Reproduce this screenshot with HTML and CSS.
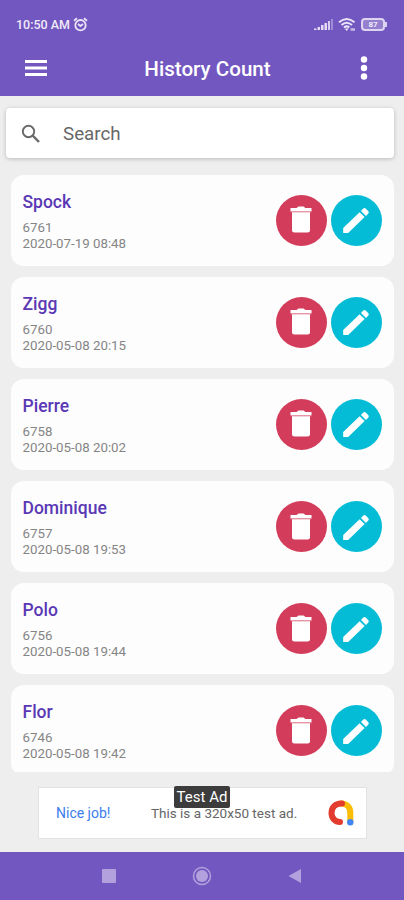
FILE: index.html
```html
<!DOCTYPE html>
<html lang="en">
<head>
  <meta charset="UTF-8">
  <meta name="viewport" content="width=device-width, initial-scale=1.0">
  <title>History Count</title>
  <link rel="stylesheet" href="styles.css">
</head>
<body>
  <!-- Shared icons -->
  <svg class="sprite" width="0" height="0">
    <symbol id="trash" viewBox="0 0 22 28">
      <path d="M0.5 2h6l2-1.400h5l2 1.400h6v3.300h-21z"/>
      <path d="M0.5 5.300h21v1h-21z" opacity=".4"/>
      <path d="M2 6.300h18v17.700a2.500 2.500 0 0 1-2.500 2.500h-13a2.500 2.500 0 0 1-2.500-2.500z"/>
    </symbol>
    <symbol id="pencil" viewBox="0 0 28 28">
      <path d="M1.200 22L17.600 6.300l5 4.800L6.200 27H1.200z"/>
      <path d="M19 5l2.300-2.400q1.200-1.100 2.400 0l2.600 2.600q1.100 1.100 0 2.300L24 9.900z"/>
    </symbol>
  </svg>

  <header class="header">
    <div class="status-bar">
      <span class="time">10:50 AM</span>
      <svg class="alarm" width="15" height="15" viewBox="0 0 15 15" fill="none" stroke="#e9e3f7" stroke-width="1.8">
        <circle cx="7.5" cy="8.2" r="5.2"/>
        <path d="M1 3.7l3-2.400M14 3.7l-3-2.400M5 7l2.500 2L10 7"/>
      </svg>
      <div class="status-icons">
        <svg width="19" height="12" viewBox="0 0 19 12" fill="#e4dcf4">
          <path d="M0 9.5h2.5V11H0zM3.600 8h2.400v3H3.600zM7 6h2.500v5H7zM10.500 4H13v7h-2.500z"/>
          <path d="M14 2h2v9h-2z" opacity=".9"/>
          <path d="M17 0h2v11h-2z" opacity=".4"/>
        </svg>
        <svg width="18" height="14" viewBox="0 0 18 14" fill="none" stroke="#e9e3f7" stroke-width="2">
          <path d="M1 4.300q7.700-6.500 15.500 0M3.500 7q5.200-4.500 10.500 0M6 9.500q2.700-2.300 5.300 0"/>
          <path d="M8.700 13L6.700 10.400h4z" fill="#e9e3f7" stroke="none"/>
          <path d="M12.500 11.500h4.500" stroke-width="2.500" opacity=".7"/>
        </svg>
        <div class="battery">87</div>
      </div>
    </div>
    <div class="toolbar">
      <svg width="22" height="16" viewBox="0 0 22 16" fill="#fff">
        <path d="M0 0h22v3H0zM0 6.500h22v3H0zM0 13h22v3H0z"/>
      </svg>
      <h1 class="title">History Count</h1>
      <svg width="8" height="24" viewBox="0 0 8 24" fill="#fff">
        <circle cx="4" cy="3.500" r="3.200"/>
        <circle cx="4" cy="12" r="3.200"/>
        <circle cx="4" cy="20.500" r="3.200"/>
      </svg>
    </div>
  </header>

  <main class="content">
    <div class="search">
      <svg width="20" height="20" viewBox="0 0 20 20" fill="none" stroke="#6a6a6a" stroke-width="1.900">
        <circle cx="7.500" cy="7.500" r="5.700"/>
        <path d="M11.700 11.700l6.300 6.300" stroke-width="2.400"/>
      </svg>
      <span>Search</span>
    </div>

    <div class="list">
      <div class="card">
        <div class="info">
          <h2>Spock</h2>
          <p>6761</p>
          <p>2020-07-19 08:48</p>
        </div>
        <button class="round delete"><svg width="22" height="28"><use href="#trash"/></svg></button>
        <button class="round edit"><svg width="28" height="28"><use href="#pencil"/></svg></button>
      </div>
      <div class="card">
        <div class="info">
          <h2>Zigg</h2>
          <p>6760</p>
          <p>2020-05-08 20:15</p>
        </div>
        <button class="round delete"><svg width="22" height="28"><use href="#trash"/></svg></button>
        <button class="round edit"><svg width="28" height="28"><use href="#pencil"/></svg></button>
      </div>
      <div class="card">
        <div class="info">
          <h2>Pierre</h2>
          <p>6758</p>
          <p>2020-05-08 20:02</p>
        </div>
        <button class="round delete"><svg width="22" height="28"><use href="#trash"/></svg></button>
        <button class="round edit"><svg width="28" height="28"><use href="#pencil"/></svg></button>
      </div>
      <div class="card">
        <div class="info">
          <h2>Dominique</h2>
          <p>6757</p>
          <p>2020-05-08 19:53</p>
        </div>
        <button class="round delete"><svg width="22" height="28"><use href="#trash"/></svg></button>
        <button class="round edit"><svg width="28" height="28"><use href="#pencil"/></svg></button>
      </div>
      <div class="card">
        <div class="info">
          <h2>Polo</h2>
          <p>6756</p>
          <p>2020-05-08 19:44</p>
        </div>
        <button class="round delete"><svg width="22" height="28"><use href="#trash"/></svg></button>
        <button class="round edit"><svg width="28" height="28"><use href="#pencil"/></svg></button>
      </div>
      <div class="card">
        <div class="info">
          <h2>Flor</h2>
          <p>6746</p>
          <p>2020-05-08 19:42</p>
        </div>
        <button class="round delete"><svg width="22" height="28"><use href="#trash"/></svg></button>
        <button class="round edit"><svg width="28" height="28"><use href="#pencil"/></svg></button>
      </div>
    </div>
  </main>

  <div class="ad">
    <span class="ad-link">Nice job!</span>
    <span class="ad-text">This is a 320x50 test ad.</span>
    <svg width="26" height="26" viewBox="0 0 26 26" fill="none" stroke-width="6" stroke-linecap="round">
      <path d="M13 3.500C19 3.500 22.300 7.500 22.300 12.500V22" stroke="#fbbc04"/>
      <path d="M14 3.500C7 3 3.500 8 3.500 13C3.500 18 7 22 12 22" stroke="#e33b2e"/>
      <circle cx="22.300" cy="22.300" r="3.200" fill="#4285f4" stroke="none"/>
    </svg>
    <span class="ad-label">Test Ad</span>
  </div>

  <nav class="nav-bar">
    <svg width="14" height="14"><rect width="14" height="14" rx="1" fill="#b3a1dd"/></svg>
    <svg width="20" height="20" viewBox="0 0 20 20">
      <circle cx="10" cy="10" r="8.500" fill="none" stroke="#b3a1dd" stroke-width="1.500"/>
      <circle cx="10" cy="10" r="6" fill="#b3a1dd"/>
    </svg>
    <svg width="14" height="16" viewBox="0 0 14 16"><path d="M0.500 8L13 1v14z" fill="#b3a1dd"/></svg>
  </nav>
</body>
</html>
```

FILE: styles.css
```css
* {
  box-sizing: border-box;
}

body {
  margin: 0;
  height: 900px;
  display: flex;
  flex-direction: column;
  overflow: hidden;
  background-color: #eeeeee;
  font-family: Roboto, sans-serif;
}

h1, h2, p {
  margin: 0;
}

.sprite {
  position: absolute;
}

/* Header */
.header {
  height: 96px;
  flex-shrink: 0;
  background-color: #7357c0;
  color: white;
}

.status-bar {
  display: flex;
  align-items: center;
  height: 42px;
  padding: 7px 17px 0 16px;
}

.time {
  font-size: 12.5px;
  font-weight: 500;
  color: #f0ebfa;
}

.alarm {
  margin-left: 3px;
}

.status-icons {
  display: flex;
  align-items: center;
  gap: 5px;
  margin-left: auto;
}

.battery {
  position: relative;
  width: 24px;
  height: 13px;
  margin-right: 2px;
  border: 2px solid #ddd4f1;
  border-radius: 4px;
  background-color: #9580d0;
  color: #f0ebfa;
  font-size: 8px;
  font-weight: 700;
  line-height: 9px;
  text-align: center;
}

/* Battery tip */
.battery::after {
  content: "";
  position: absolute;
  right: -4px;
  top: 2px;
  width: 2px;
  height: 5px;
  background-color: #ddd4f1;
}

.toolbar {
  display: flex;
  align-items: center;
  justify-content: space-between;
  height: 52px;
  padding: 0 36px 0 25px;
}

.title {
  padding-left: 8px;
  padding-top: 2px;
  font-size: 20.6px;
  font-weight: 500;
}

/* Search and list */
.content {
  height: 676px;
  flex-shrink: 0;
  padding: 12px 10px 0 6px;
  overflow: hidden;
}

.search {
  display: flex;
  align-items: center;
  gap: 22px;
  height: 50px;
  padding: 1px 0 0 15px;
  border-radius: 4px;
  background-color: white;
  box-shadow: 0 1px 4px rgba(0, 0, 0, 0.22);
  color: #686868;
  font-size: 18.8px;
}

.list {
  display: flex;
  flex-direction: column;
  gap: 11.2px;
  margin: 16.5px 0 0 5px;
  height: 597.5px;
  overflow: hidden;
  border-radius: 0 0 5px 5px;
}

.card {
  display: flex;
  align-items: center;
  flex-shrink: 0;
  gap: 4px;
  height: 91px;
  padding: 0 12.5px 0 11.5px;
  border-radius: 13px;
  background-color: #fdfdfd;
}

.info {
  flex: 1;
  padding-top: 2px;
  color: #858585;
  font-size: 13.3px;
  line-height: 16px;
}

.info h2 {
  margin-bottom: 7px;
  color: #5a38b5;
  font-size: 17.5px;
  font-weight: 500;
  line-height: 22px;
}

.round {
  display: flex;
  align-items: center;
  justify-content: center;
  width: 51px;
  height: 51px;
  padding: 0;
  border: none;
  border-radius: 50%;
  fill: white;
}

.delete {
  background-color: #d33d5b;
}

.edit {
  background-color: #04bcd6;
}

/* Ad banner */
.ad {
  position: relative;
  display: flex;
  align-items: center;
  flex-shrink: 0;
  width: 329px;
  height: 52px;
  margin: 15px 0 0 38px;
  padding: 0 12px 0 17px;
  border: 1px solid #e2e2e2;
  background-color: white;
  font-size: 14px;
}

.ad-link {
  width: 95px;
  color: #3b7ded;
}

.ad-text {
  flex: 1;
  color: #666;
  font-size: 13.5px;
  white-space: nowrap;
}

.ad-label {
  position: absolute;
  left: 135px;
  top: -2px;
  width: 56px;
  height: 22px;
  border-radius: 2px;
  background-color: #3c3c3c;
  color: white;
  font-size: 15px;
  line-height: 23px;
  text-align: center;
}

/* System navigation */
.nav-bar {
  display: flex;
  align-items: center;
  justify-content: space-between;
  height: 48px;
  margin-top: auto;
  padding: 0 102px;
  background-color: #7357c0;
}
```
